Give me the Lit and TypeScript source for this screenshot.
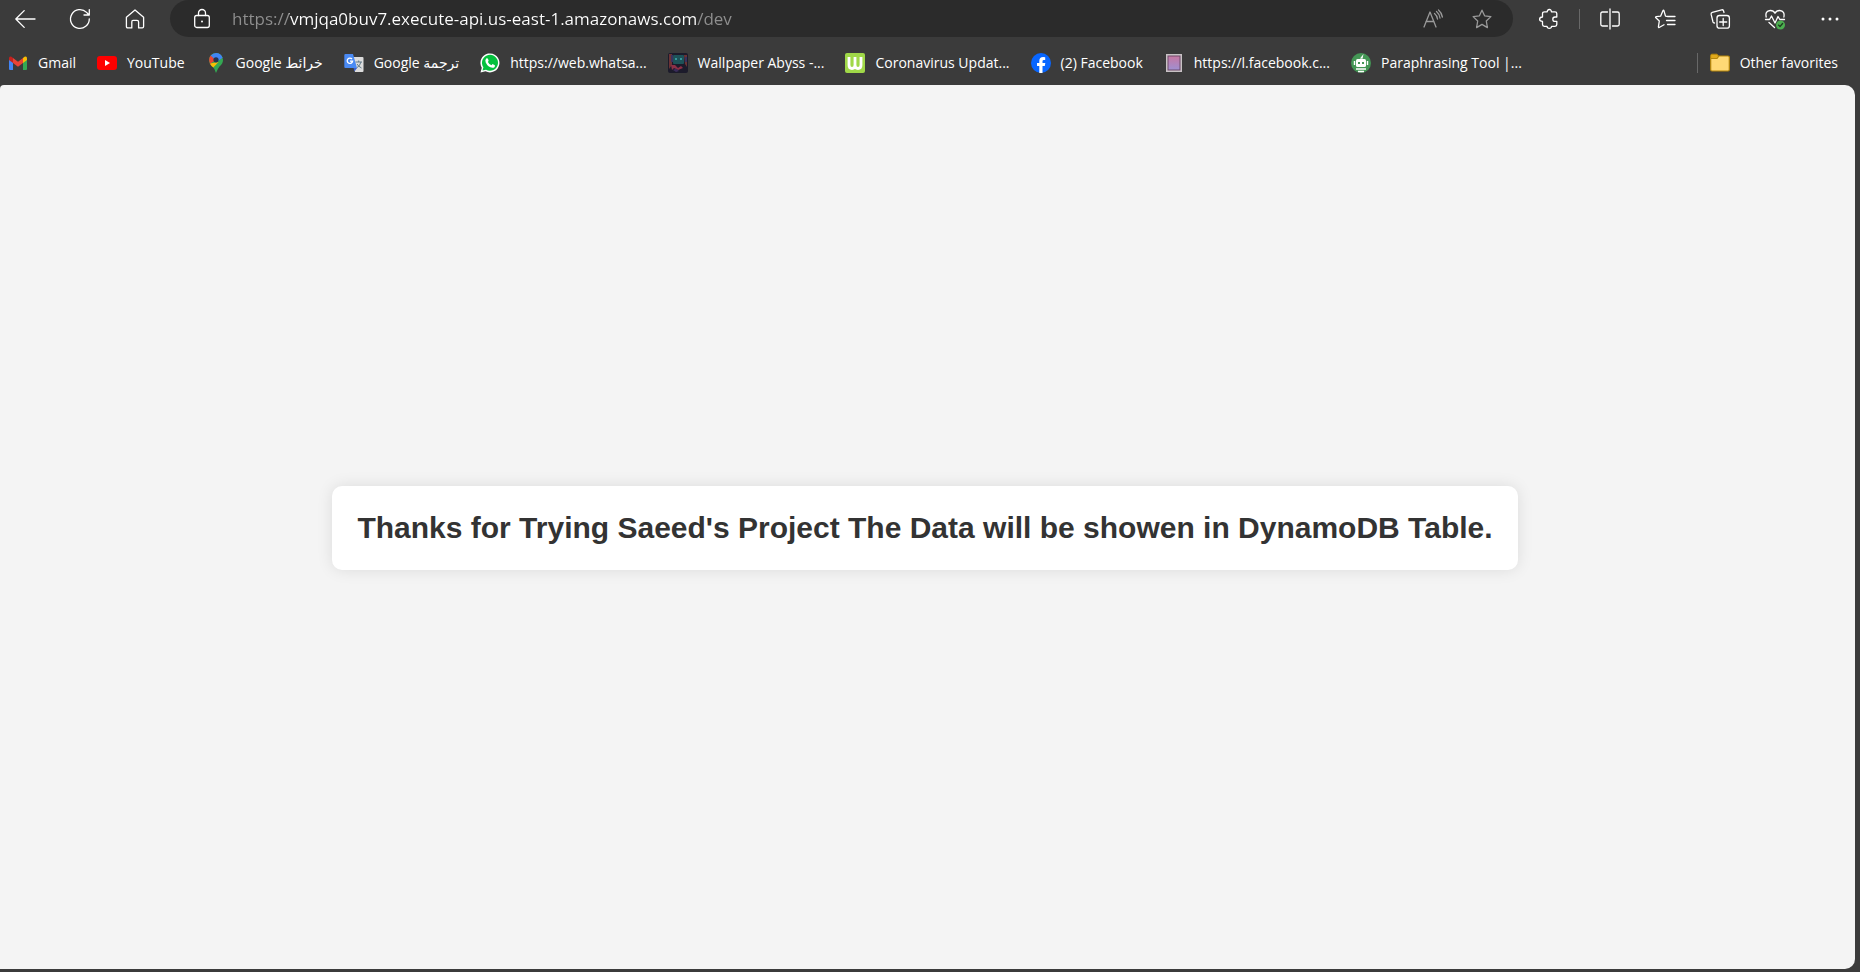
import { LitElement, html, css, svg, nothing } from "lit";
import { customElement } from "lit/decorators.js";

const line = (body: unknown, size = 20) => html`<svg class="line" width=${size} height=${size} viewBox="0 0 20 20" aria-hidden="true">${body}</svg>`;
const art = (body: unknown) => html`<svg class="art" width="20" height="20" viewBox="0 0 20 20" aria-hidden="true">${body}</svg>`;

const STAR = "M10 1.2L12.6 6.8L18.9 7.6L14.3 12L15.4 18.6L10 15.4L4.6 18.6L5.7 12L1.1 7.6L7.4 6.8Z";

const icons = {
  back: line(svg`<path d="M20 10H.8M9.2 1.6L.8 10l8.400 8.400"/>`),
  refresh: line(svg`<path d="M19.300 9.800A9.400 9.400 0 1 1 16.600 3.400L19 6M19.300 .6V6H14"/>`),
  home: line(svg`<path d="M1.400 8.200L10 .9L18.600 8.200V17.600Q18.600 18.900 17.300 18.900H13.600V13Q13.600 11.400 12 11.400H8Q6.800 11.400 6.800 13V18.900H2.700Q1.400 18.900 1.400 17.600Z"/>`),
  lock: line(svg`<rect x="2.700" y="6.500" width="14.600" height="12" rx="2"/><path d="M6.500 6.500V4a3.500 3.500 0 0 1 7 0V6.500"/><circle cx="10" cy="12.500" r="1" class="dot"/>`),
  read: line(svg`<path d="M1 18L7 3L13 18M3 12.500H11M11.500 4.500Q14 6.500 14.500 10M13.500 2.500Q16.500 5 17 9M15.500 1Q18.500 3.500 19.400 8"/>`),
  star: line(svg`<path d=${STAR}/>`),
  puzzle: line(svg`<path d="M5.500 2.800H8.200Q8.200 .5 10.300 .5T12.400 2.800H16Q17.800 2.800 17.800 4.600V8H16Q13.800 8 13.800 10.200T16 12.400H17.800V15.600Q17.800 17.300 16 17.300H12.600Q12.400 19.400 10.300 19.400T8 17.300H5.300Q3.500 17.300 3.500 15.600V12.400Q.6 12.300 .6 10.200T3.500 8V4.600Q3.500 2.800 5.500 2.800Z"/>`),
  split: line(svg`<path d="M7.500 3H2.500Q.8 3 .8 4.700V15.300Q.8 17 2.500 17H7.500M12.500 3H17.500Q19.200 3 19.200 4.700V15.300Q19.200 17 17.500 17H12.500M10 0V20"/>`),
  favorites: line(svg`<path d="M13 7.500L10.500 7.200L9 1.800Q8.500 .6 7.900 1.800L5.600 7.200L1.200 7.600Q.1 8 .9 8.800L4.300 12L3.400 17.800Q3.600 19 4.600 18.300L9 15.800M13 7.500H20M11.500 11.500H20M12.500 15.500H20"/>`),
  collections: line(svg`<rect x="7" y="6.500" width="12.400" height="12.700" rx="2.500"/><path d="M13.200 9.500V16.500M9.700 13H16.700M14 3.500L13.500 1.800Q13 .5 11.700 .8L2.300 3.300Q.8 3.700 1.100 5.200L3 13Q3.300 14 4.500 14"/>`),
  health: line(svg`<path d="M1.200 8Q-.2 2 5.200 1.500Q8.500 1.400 10 4.200Q11.500 1.400 14.800 1.500Q20 2 18.900 8M.5 10.500H4.500L6.500 7L10 14L13 7.500L14.800 10.500H19.500M4 13.500L9.500 18.500"/><circle cx="15.500" cy="16" r="4.500" class="ok"/><path d="M13.500 16.100L15 17.500L17.600 14.500" class="tick"/>`),
  more: line(svg`<circle cx="3" cy="10" r="1.500" class="dot"/><circle cx="10" cy="10" r="1.500" class="dot"/><circle cx="17" cy="10" r="1.500" class="dot"/>`),
};

const artIcons = {
  gmail: art(svg`<path fill="#4285f4" d="M1 5.500L5 8.500V17H2Q1 17 1 16Z"/><path fill="#34a853" d="M15 8.500L19 5.500V16Q19 17 18 17H15Z"/><path fill="#fbbc04" d="M15 5L16.500 3.800Q19 2.700 19 5.500V7L15 10Z"/><path fill="#c5221f" d="M1 7V5.500Q1 2.700 3.500 3.800L5 5V10Z"/><path fill="#ea4335" d="M5 5L10 8.800L15 5V10L10 13.800L5 10Z"/>`),
  youtube: art(svg`<rect y="3" width="20" height="14" rx="3" fill="#f00"/><path d="M8 7L13 10L8 13Z" fill="#fff"/>`),
  maps: art(svg`<path fill="#34a853" d="M3 7a7 7 0 0 1 14 0Q17 10.500 13.500 13.500Q11.500 16 10 20Q9 16 6.500 13.500Q3 10.500 3 7Z"/><path fill="#fbbc04" d="M3.800 10.500L12.500 9L7.300 14.500Q4.800 12.500 3.800 10.500Z"/><path fill="#ea4335" d="M4.700 2.500L10 7L4 10.800Q2 6 4.700 2.500Z"/><path fill="#4285f4" d="M4.700 2.500Q7 0 10 0Q15 .2 16.600 4.800L10 9.500L8 5.500Z"/><circle cx="10" cy="6.800" r="2.600" fill="#26334d"/>`),
  translate: art(svg`<path d="M7 4H18.500Q19.500 4 19.500 5V18Q19.500 19 18.500 19H11Z" fill="#dcdcdc"/><path d="M11.500 9H18M14.700 7.500V9M17 9Q16 13 12.500 15M13 11Q14.500 13.500 17.500 15" fill="none" stroke="#607988"/><path d="M1.500 1H9L13 15H1.500Q.3 15 .3 14V2Q.3 1 1.500 1Z" fill="#4a8af4"/><path d="M9.500 15H13L10.500 18.500Z" fill="#3a5fcd"/><path d="M8 6A2.700 2.700 0 1 0 8.600 8.200H6" fill="none" stroke="#fff" stroke-width="1.300"/>`),
  whatsapp: art(svg`<path d="M.5 19.500L1.800 14.800A9.500 9.500 0 1 1 5.500 18.300Z" fill="#fff"/><path d="M2.500 17.500L3.400 14.300A8 8 0 1 1 6 16.700Z" fill="#05c13e"/><path d="M6.200 5.500Q7.500 4.600 8 6L8.600 7.500Q8.700 8 7.900 8.900Q9 11.300 11.500 12.200L12.500 11.100L14.900 12.200Q15.200 14.800 12.400 14.800Q8 14.300 5.700 9.500Q4.800 7 6.200 5.500Z" fill="#fff"/>`),
  wallpaper: art(svg`<rect width="20" height="20" rx="2" fill="#1c1b2b"/><path d="M1 1H4V12L1 16ZM16 2H19V14L17 11Z" fill="#6b3335"/><path d="M3 2H5V9H3ZM17 4H19V9H17Z" fill="#39335f"/><rect x="5" y="2" width="11" height="9" rx="1" fill="#1d5258"/><path d="M7 5H9V7H7ZM12 5H14V7H12Z" fill="#36969a"/><path d="M3 12L7 12L10 15L13 13L15 15L10 17L6 15L4 17Z" fill="#8c3047"/><path d="M5 17L8 15.500L11 18L8 19Z" fill="#3a2c5a"/>`),
  corona: art(svg`<rect width="20" height="20" rx="2" fill="#a0d848"/><path d="M4 4V12Q4 15.500 7 15.500T10 12V4M10 12Q10 15.500 13 15.500T16 12V4" fill="none" stroke="#fff" stroke-width="2.800"/>`),
  facebook: art(svg`<circle cx="10" cy="10" r="10" fill="#0866ff"/><path d="M8.300 19.900V13H6V10H8.300V8Q8.300 4 12.200 4Q13.500 4 14.200 4.200V7H12.800Q11.500 7 11.500 8.300V10H14.300L13.800 13H11.500V19.900Z" fill="#fff"/>`),
  frame: html`<svg class="art" width="20" height="20" viewBox="0 0 20 20" aria-hidden="true"><defs><linearGradient id="frame" x2="0" y2="1"><stop stop-color="#c678a4"/><stop offset="1" stop-color="#a08fd0"/></linearGradient></defs><rect x="2" y="1" width="16" height="18" fill="#c8c2c5"/><rect x="3.500" y="2.500" width="13" height="15" fill="#6f4a6b"/><rect x="4.500" y="3.500" width="11" height="13" fill="url(#frame)"/></svg>`,
  quill: art(svg`<circle cx="10" cy="10" r="10" fill="#449655"/><path d="M9 5.500L12.500 1L11.500 5.800Z" fill="#fff"/><rect x="5" y="6" width="10" height="8" rx="1.500" fill="#fff"/><path d="M3.500 8V12M16.500 8V12M5 16H15M7 18.500H13" stroke="#fff" stroke-width="1.400"/><path d="M7 9H9V11H7ZM11 9H13V11H11Z" fill="#449655"/>`),
  folder: art(svg`<path d="M.7 2.500Q.7 1.200 2 1.200H7L9 3.500L7 5.500H.7Z" fill="#e0a91b" stroke="#b5860b"/><path d="M.7 5.500H7L9 3H18Q19.300 3 19.300 4.300V16.500Q19.300 18 18 18H2Q.7 18 .7 16.500Z" fill="#ffd975" stroke="#b5860b" stroke-width="1.200"/>`),
};

const bookmarks = [
  { icon: artIcons.gmail, label: "Gmail" },
  { icon: artIcons.youtube, label: "YouTube" },
  { icon: artIcons.maps, label: "Google خرائط" },
  { icon: artIcons.translate, label: "Google ترجمة" },
  { icon: artIcons.whatsapp, label: "https://web.whatsa..." },
  { icon: artIcons.wallpaper, label: "Wallpaper Abyss -..." },
  { icon: artIcons.corona, label: "Coronavirus Updat..." },
  { icon: artIcons.facebook, label: "(2) Facebook" },
  { icon: artIcons.frame, label: "https://l.facebook.c..." },
  { icon: artIcons.quill, label: "Paraphrasing Tool |..." },
];

@customElement("app-root")
export class AppRoot extends LitElement {
  static styles = css`
    :host { display: flex; flex-direction: column; min-height: 100vh; background: #3b3b3b; color: #fff; font-family: "Open Sans", "DejaVu Sans", sans-serif; }
    * { box-sizing: border-box; }
    svg { display: block; flex: none; }
    .line { fill: none; stroke: currentColor; stroke-width: 1.3; stroke-linecap: round; stroke-linejoin: round; overflow: visible; }
    .dot { fill: currentColor; stroke: none; }
    .ok { fill: #4caf50; stroke: none; }
    .tick { stroke: #1f3b20; }
    button { display: grid; place-items: center; width: 50px; height: 37px; padding: 0; border: 0; background: none; color: inherit; }
    .toolbar { display: flex; align-items: center; gap: 5px; padding-right: 5px; }
    .address { flex: 1; min-width: 0; display: flex; align-items: center; height: 37px; margin: 0 6px 0 5px; padding: 0 11px 0 22px; border-radius: 19px; background: #2b2b2b; }
    .address button { width: 40px; color: #9a9a9a; }
    .address .read { margin-right: 9px; }
    .url { flex: 1; min-width: 0; height: 37px; margin-left: 20px; padding: 0; border: 0; outline: 0; font: 17px/37px "Open Sans", sans-serif; color: transparent; background: linear-gradient(90deg, #8f8f8f 57px, #fff 57px 464px, #8f8f8f 464px); -webkit-background-clip: text; background-clip: text; }
    .rule { width: 1px; height: 20px; background: #686868; }
    .bookmarks { display: flex; align-items: center; gap: 21px; height: 48px; padding: 4px 22px 0 8px; }
    .bookmark { display: flex; align-items: center; gap: 10px; color: inherit; text-decoration: none; font-size: 14px; line-height: 20px; white-space: nowrap; }
    .others { display: flex; align-items: center; gap: 12px; margin-left: auto; }
    .page { flex: 1; display: grid; place-items: center; margin: 0 5px 3px 0; padding: 2px 5px 0 0; border-radius: 4px 10px 10px 0; background: #f4f4f4; }
    .card { padding: 26px 25px; border-radius: 10px; background: #fff; box-shadow: 0 0 16px rgba(0, 0, 0, 0.1); }
    h1 { margin: 0; font: bold 30px/32px "Liberation Sans", Arial, sans-serif; color: #333; }
  `;

  private tool(label: string, icon: unknown, cls: string = "") {
    return html`<button type="button" class=${cls || nothing} aria-label=${label}>${icon}</button>`;
  }

  render() {
    return html`
      <header>
        <div class="toolbar">
          ${this.tool("Back", icons.back)} ${this.tool("Refresh", icons.refresh)} ${this.tool("Home", icons.home)}
          <div class="address">
            ${icons.lock}
            <input class="url" type="text" aria-label="Address" spellcheck="false" value="https://vmjqa0buv7.execute-api.us-east-1.amazonaws.com/dev" />
            ${this.tool("Read aloud", icons.read, "read")} ${this.tool("Add to favorites", icons.star)}
          </div>
          ${this.tool("Extensions", icons.puzzle)}
          <span class="rule"></span>
          ${this.tool("Split screen", icons.split)} ${this.tool("Favorites", icons.favorites)}
          ${this.tool("Collections", icons.collections)} ${this.tool("Browser essentials", icons.health)}
          ${this.tool("Settings and more", icons.more)}
        </div>
        <nav class="bookmarks" aria-label="Favorites bar">
          ${bookmarks.map((b) => html`<a class="bookmark" href="#">${b.icon}<span>${b.label}</span></a>`)}
          <div class="others"><span class="rule"></span><a class="bookmark" href="#">${artIcons.folder}<span>Other favorites</span></a></div>
        </nav>
      </header>
      <main class="page">
        <div class="card"><h1>Thanks for Trying Saeed's Project The Data will be showen in DynamoDB Table.</h1></div>
      </main>
    `;
  }
}
